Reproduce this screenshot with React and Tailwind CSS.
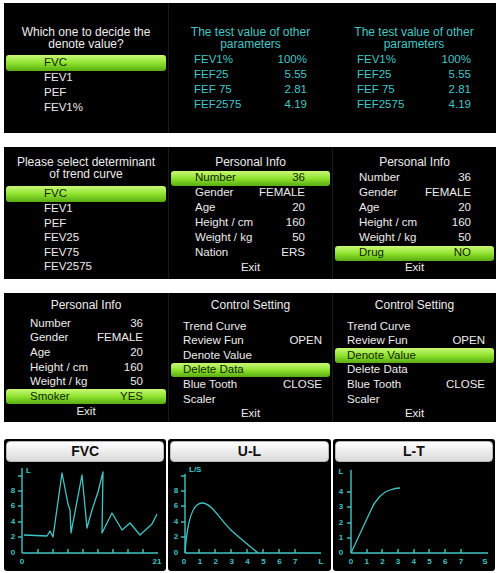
import React from 'react';

const lime = 'bg-linear-to-b from-[#c8f772] via-[#8fe32c] to-[#58ad12] text-[#14230a] rounded-[3px]';
const teal = '#40c6c4';

const Item = ({ children, active, h, pad }) => (
    <div className={`${h} mx-[2px] flex items-center ${pad} ${active ? lime : 'text-[#ececec]'}`}>{children}</div>
);

const Pair = ({ label, value, active, h, pad }) => (
    <div className={`${h} mx-[2px] flex items-center justify-between ${pad} ${active ? lime : 'text-[#ececec]'}`}>
        <span>{label}</span>
        <span>{value}</span>
    </div>
);

const testValues = [
    ['FEV1%', '100%'],
    ['FEF25', '5.55'],
    ['FEF 75', '2.81'],
    ['FEF2575', '4.19'],
];

const personal = [
    ['Number', '36'],
    ['Gender', 'FEMALE'],
    ['Age', '20'],
    ['Height / cm', '160'],
    ['Weight / kg', '50'],
];

const control = [
    ['Trend Curve', ''],
    ['Review Fun', 'OPEN'],
    ['Denote Value', ''],
    ['Delete Data', ''],
    ['Blue Tooth', 'CLOSE'],
    ['Scaler', ''],
];

// two-line panel heading, lines ~12.5px apart
const Title = ({ a, b, color = 'text-[#ececec]' }) => (
    <div className={`text-center text-[12px] leading-[12.5px] ${color}`}>
        <div>{a}</div>
        {b && <div>{b}</div>}
    </div>
);

const TestPanel = ({ border }) => (
    <div className={`pt-[22.5px] ${border}`}>
        <Title a="The test value of other" b="parameters" color="text-[#43c7c5]" />
        <div className="mt-[2px] text-[11.5px] text-[#43c7c5]">
            {testValues.map(([l, v]) => (
                <div key={l} className="h-[15px] flex items-center justify-between px-[25px]">
                    <span>{l}</span>
                    <span>{v}</span>
                </div>
            ))}
        </div>
    </div>
);

const ControlPanel = ({ active, pad }) => (
    <div className="pt-[6px] border-l border-[#1a1a1a]">
        <Title a="Control Setting" />
        <div className="mt-[7.5px] text-[11.5px]">
            {control.map(([l, v]) => (
                <Pair key={l} label={l} value={v} active={l === active} h="h-[14.6px]" pad={pad} />
            ))}
            <div className="h-[14.6px] flex items-center justify-center text-[#ececec]">Exit</div>
        </div>
    </div>
);

const Lbl = ({ x, y, t, anchor = 'middle' }) => (
    <text x={x} y={y} fill={teal} fontSize="8" fontWeight="bold" fontFamily="'Liberation Sans', Arial, sans-serif" textAnchor={anchor} dominantBaseline="middle">{t}</text>
);

const Card = ({ title, children }) => (
    <div className="bg-black rounded-[3px] p-[2px] flex flex-col h-[132px]">
        <div className="h-[21px] shrink-0 rounded-[4px] border border-[#b8b8b8] bg-linear-to-b from-white to-[#dadada] flex items-center justify-center font-bold text-[14px] text-[#111]">{title}</div>
        <svg width="158" height="107" className="block">{children}</svg>
    </div>
);

const FvcChart = () => (
    <>
        <g stroke={teal} strokeWidth="1.4" fill="none">
            <line x1="16" y1="6" x2="16" y2="91" />
            <line x1="16" y1="91" x2="152" y2="91" />
            {[14, 29, 44, 60, 75].map(y => <line key={y} x1="12" y1={y} x2="16" y2={y} />)}
            {[32, 47, 62, 77, 92, 107, 122, 137].map(x => <line key={x} x1={x} y1="91" x2={x} y2="87" />)}
            <polyline strokeWidth="1.3" strokeLinejoin="round" points="18,73 41,74 44,69 47,75 56,11 62,42 64,48 65,71 76,13 81,66 86,48 92,30 97,10 96,71 106,51 116,68 124,61 134,73 146,62 151,52" />
        </g>
        <Lbl x="20" y="9" t="L" anchor="start" />
        <Lbl x="7" y="29" t="8" />
        <Lbl x="7" y="44" t="6" />
        <Lbl x="7" y="60" t="4" />
        <Lbl x="7" y="75" t="2" />
        <Lbl x="7" y="91" t="0" />
        <Lbl x="16" y="100" t="0" />
        <Lbl x="151" y="100" t="21" />
    </>
);

const UlChart = () => (
    <>
        <g stroke={teal} strokeWidth="1.4" fill="none">
            <line x1="15" y1="12" x2="15" y2="91" />
            <line x1="15" y1="91" x2="151" y2="91" />
            {[14, 29, 44, 60, 75].map(y => <line key={y} x1="11" y1={y} x2="15" y2={y} />)}
            {[29, 45, 61, 77, 93, 109, 125].map(x => <line key={x} x1={x} y1="91" x2={x} y2="87" />)}
            <path strokeWidth="1.3" d="M15,91 C17,62 22,41 32,41 C42,41 50,58 62,69 C72,78 82,86 88,91" />
        </g>
        <Lbl x="19" y="8" t="L/S" anchor="start" />
        <Lbl x="6" y="29" t="8" />
        <Lbl x="6" y="44" t="6" />
        <Lbl x="6" y="60" t="4" />
        <Lbl x="6" y="75" t="2" />
        <Lbl x="6" y="91" t="0" />
        {['0', '1', '2', '3', '4', '5', '6', '7'].map((t, i) => <Lbl key={t} x={14 + i * 15.9} y="100" t={t} />)}
        <Lbl x="151" y="100" t="L" />
    </>
);

const LtChart = () => (
    <>
        <g stroke={teal} strokeWidth="1.4" fill="none">
            <line x1="16" y1="8" x2="16" y2="91" />
            <line x1="16" y1="91" x2="153" y2="91" />
            {[30, 45, 61, 76].map(y => <line key={y} x1="12" y1={y} x2="16" y2={y} />)}
            {[32, 47, 63, 79, 94, 110, 126].map(x => <line key={x} x1={x} y1="91" x2={x} y2="87" />)}
            <path strokeWidth="1.3" d="M16,91 L36,48 C40,38 48,30 55,28 C59,26.5 62,26 65,26" />
        </g>
        <Lbl x="6" y="10" t="L" />
        <Lbl x="6" y="30" t="4" />
        <Lbl x="6" y="45" t="3" />
        <Lbl x="6" y="61" t="2" />
        <Lbl x="6" y="76" t="1" />
        <Lbl x="6" y="91" t="0" />
        {['0', '1', '2', '3', '4', '5', '6', '7'].map((t, i) => <Lbl key={t} x={16 + i * 15.7} y="100" t={t} />)}
        <Lbl x="150" y="100" t="S" />
    </>
);

export default function App() {
    return (
        <div className="w-[500px] h-[573px] bg-white pt-[3px] pl-[4px] font-['Liberation_Sans',Arial,sans-serif] overflow-hidden">
            {/* Row 1: denote value + test values */}
            <div className="w-[492px] h-[130px] bg-black grid grid-cols-3">
                <div className="pt-[22.5px]">
                    <Title a="Which one to decide the" b="denote value?" />
                    <div className="mt-[4px] text-[11.5px]">
                        {['FVC', 'FEV1', 'PEF', 'FEV1%'].map((t, i) => (
                            <Item key={t} active={i === 0} h={i === 0 ? 'h-[16px]' : 'h-[15px]'} pad="pl-[38px]">{t}</Item>
                        ))}
                    </div>
                </div>
                <TestPanel border="border-l border-[#1a1a1a]" />
                <TestPanel border="" />
            </div>

            {/* Row 2: trend curve + personal info */}
            <div className="mt-[14px] w-[492px] h-[132px] bg-black grid grid-cols-3">
                <div className="pt-[8.5px]">
                    <Title a="Please select determinant" b="of trend curve" />
                    <div className="mt-[5px] text-[11.5px]">
                        {['FVC', 'FEV1', 'PEF', 'FEV25', 'FEV75', 'FEV2575'].map((t, i) => (
                            <Item key={t} active={i === 0} h={i === 0 ? 'h-[16px]' : 'h-[14.5px]'} pad="pl-[38px]">{t}</Item>
                        ))}
                    </div>
                </div>
                <div className="pt-[9px] border-l border-[#1a1a1a]">
                    <Title a="Personal Info" />
                    <div className="mt-[2px] text-[11.5px]">
                        {[...personal, ['Nation', 'ERS']].map(([l, v], i) => (
                            <Pair key={l} label={l} value={v} active={i === 0} h="h-[15px]" pad="pl-[24px] pr-[25px]" />
                        ))}
                        <div className="h-[15px] flex items-center justify-center text-[#ececec]">Exit</div>
                    </div>
                </div>
                <div className="pt-[9px] border-l border-[#1a1a1a]">
                    <Title a="Personal Info" />
                    <div className="mt-[2px] text-[11.5px]">
                        {[...personal, ['Drug', 'NO']].map(([l, v]) => (
                            <Pair key={l} label={l} value={v} active={l === 'Drug'} h="h-[15px]" pad="pl-[24px] pr-[23px]" />
                        ))}
                        <div className="h-[15px] flex items-center justify-center text-[#ececec]">Exit</div>
                    </div>
                </div>
            </div>

            {/* Row 3: personal info + control settings */}
            <div className="mt-[14px] w-[492px] h-[129px] bg-black grid grid-cols-3">
                <div className="pt-[6px]">
                    <Title a="Personal Info" />
                    <div className="mt-[4.5px] text-[11.5px]">
                        {[...personal, ['Smoker', 'YES']].map(([l, v]) => (
                            <Pair key={l} label={l} value={v} active={l === 'Smoker'} h="h-[14.7px]" pad="pl-[24px] pr-[23px]" />
                        ))}
                        <div className="h-[14.7px] flex items-center justify-center text-[#ececec]">Exit</div>
                    </div>
                </div>
                <ControlPanel active="Delete Data" pad="pl-[12px] pr-[8px]" />
                <ControlPanel active="Denote Value" pad="pl-[12px] pr-[9px]" />
            </div>

            {/* Row 4: charts */}
            <div className="mt-[17px] w-[491px] grid grid-cols-3 gap-[2px]">
                <Card title="FVC"><FvcChart /></Card>
                <Card title="U-L"><UlChart /></Card>
                <Card title="L-T"><LtChart /></Card>
            </div>
        </div>
    );
}
